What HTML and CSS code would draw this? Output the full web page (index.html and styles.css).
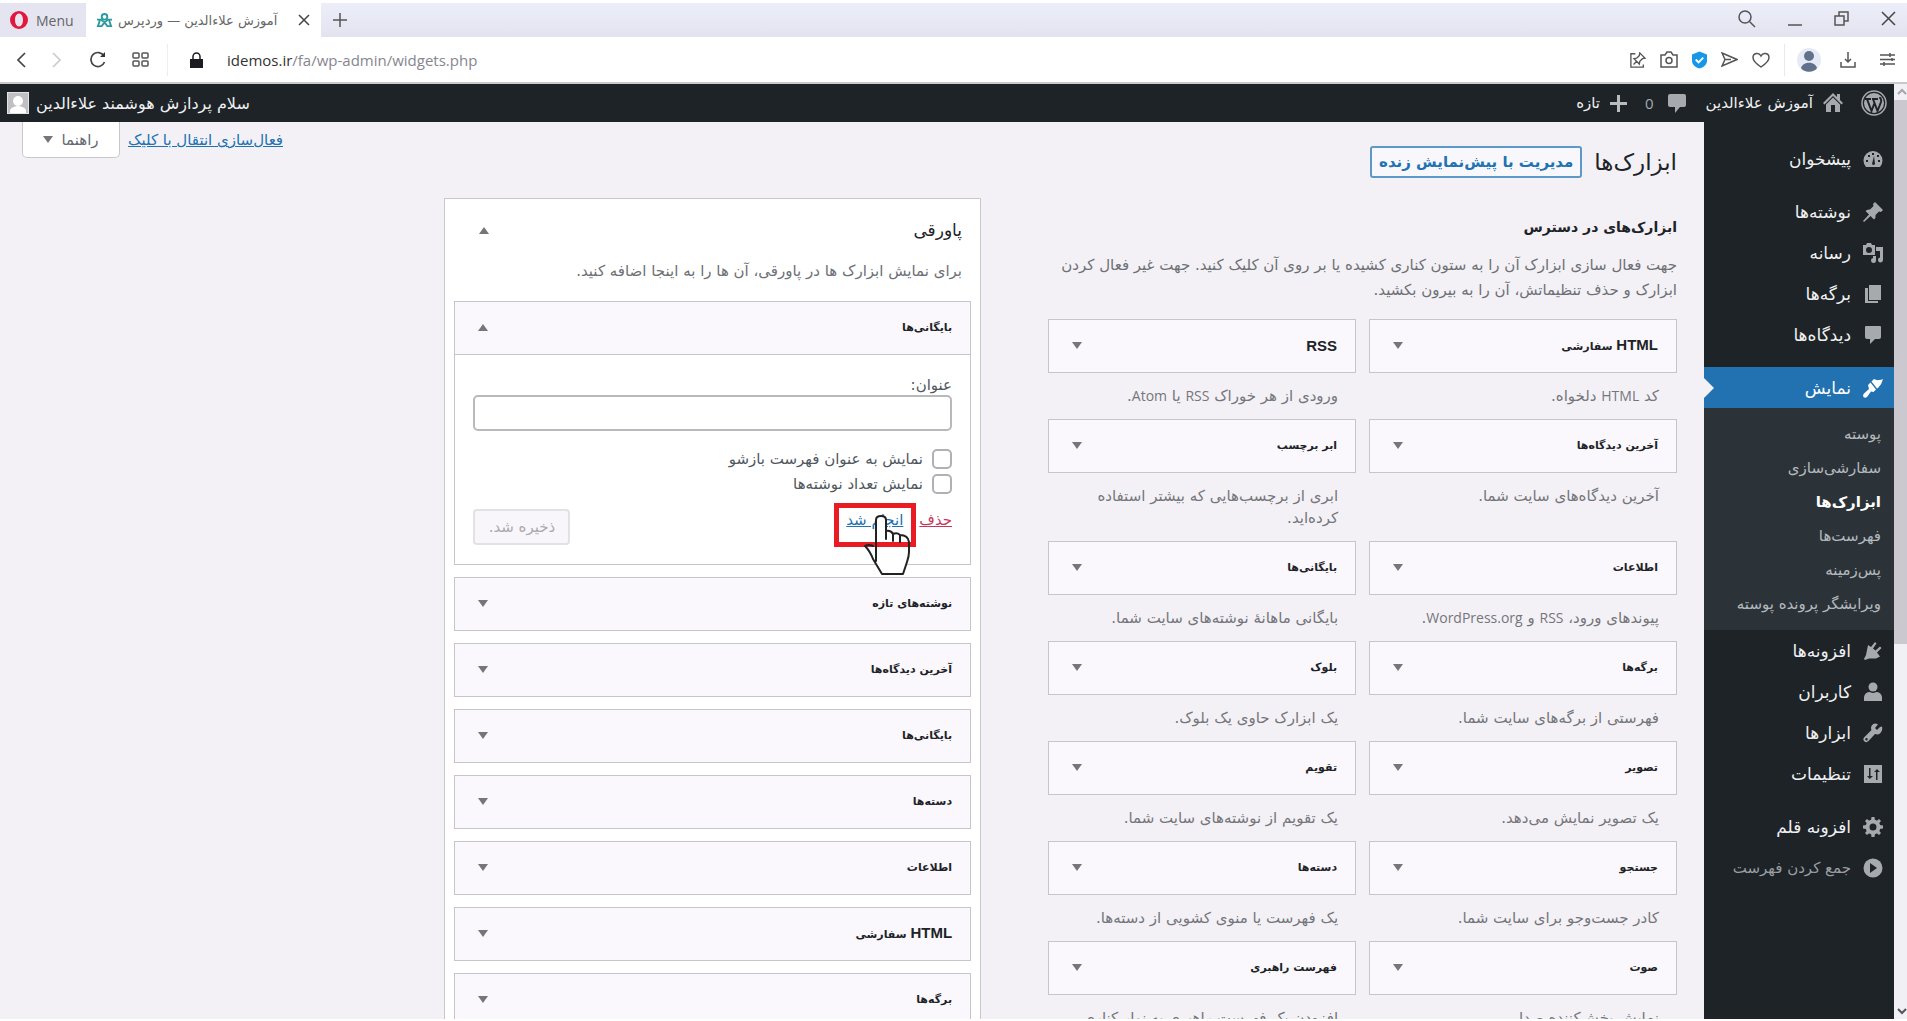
FILE: index.html
```html
<!DOCTYPE html>
<html lang="fa" dir="rtl">
<head>
<meta charset="utf-8">
<title>آموزش علاءالدین — وردپرس</title>
<link rel="stylesheet" href="styles.css">
</head>
<body>
<header class="browser" dir="ltr" lang="en">
  <div class="tabs">
    <button class="opera"><svg viewBox="0 0 18 18" width="18" height="18"><path fill="#e3173e" fill-rule="evenodd" d="M9 0a9 9 0 1 1 0 18A9 9 0 0 1 9 0zm0 2.500C6.400 2.500 5 5.500 5 9s1.400 6.500 4 6.500 4-3 4-6.500-1.400-6.500-4-6.500z"/></svg>Menu</button>
    <div class="tab">
      <svg viewBox="0 0 18 16" width="17" height="15" fill="none" stroke="#2a9aa0" stroke-width="2"><circle cx="9" cy="4" r="3"/><path d="M1 7h4l4 3 4-3h4M4 8l-2 6h4l3-4 3 4h4l-2-6"/></svg>
      <span class="tab-title" dir="rtl" lang="fa">آموزش علاءالدین — وردپرس</span>
      <button class="icon-btn"><svg viewBox="0 0 12 12" width="12" height="12" stroke="#444" stroke-width="1.500"><path d="M1 1l10 10M11 1L1 11"/></svg></button>
    </div>
    <button class="icon-btn plus"><svg viewBox="0 0 14 14" width="14" height="14" stroke="#555" stroke-width="1.500"><path d="M7 0v14M0 7h14"/></svg></button>
    <div class="win">
      <button class="icon-btn"><svg viewBox="0 0 18 18" width="18" height="18" fill="none" stroke="#555" stroke-width="1.500"><circle cx="7" cy="7" r="6"/><path d="M11.500 11.500L17 17"/></svg></button>
      <button class="icon-btn"><svg viewBox="0 0 14 14" width="14" height="14" stroke="#555" stroke-width="1.500"><path d="M0 13h14"/></svg></button>
      <button class="icon-btn"><svg viewBox="0 0 15 15" width="15" height="15" fill="none" stroke="#555" stroke-width="1.500"><path d="M1 5h9v9H1zM5 5V1h9v9h-4"/></svg></button>
      <button class="icon-btn"><svg viewBox="0 0 15 15" width="15" height="15" stroke="#444" stroke-width="1.500"><path d="M1 1l13 13M14 1L1 14"/></svg></button>
    </div>
  </div>
  <div class="nav">
    <div class="nav-left">
      <button class="icon-btn"><svg viewBox="0 0 10 16" width="10" height="16" fill="none" stroke="#444" stroke-width="1.700"><path d="M9 1L2 8l7 7"/></svg></button>
      <button class="icon-btn"><svg viewBox="0 0 10 16" width="10" height="16" fill="none" stroke="#ccc" stroke-width="1.700"><path d="M1 1l7 7-7 7"/></svg></button>
      <button class="icon-btn"><svg viewBox="0 0 17 17" width="17" height="17" fill="none" stroke="#444" stroke-width="1.700"><path d="M15 5A7 7 0 1 0 15.500 11"/><path d="M16 1v5h-5z" fill="#333" stroke="none"/></svg></button>
      <button class="icon-btn"><svg viewBox="0 0 17 15" width="17" height="15" fill="none" stroke="#555" stroke-width="1.500"><rect x="1" y="1" width="6" height="5" rx="1"/><rect x="10" y="1" width="6" height="5" rx="1"/><rect x="1" y="9" width="6" height="5" rx="1"/><rect x="10" y="9" width="6" height="5" rx="1"/></svg></button>
    </div>
    <div class="address">
      <svg viewBox="0 0 13 16" width="13" height="16"><path fill="#1b1b22" d="M0 7h13v9H0z"/><path fill="none" stroke="#1b1b22" stroke-width="1.500" d="M3 7V4.500a3.500 3.500 0 0 1 7 0V7"/></svg>
      <span class="url"><b>idemos.ir</b>/fa/wp-admin/widgets.php</span>
    </div>
    <div class="nav-right">
      <button class="icon-btn"><svg viewBox="0 0 18 18" width="16" height="16" fill="none" stroke="#555" stroke-width="1.500"><path d="M6 2H1v15h14v-3M11 1l6 6-3 .5-3 3-.5 3L4.500 7.500l3-.5 3-3zM7.500 10.500L4 14"/></svg></button>
      <button class="icon-btn"><svg viewBox="0 0 18 17" width="18" height="17" fill="none" stroke="#555" stroke-width="1.500"><path d="M1 4h4l2-3h4l2 3h4v12H1z"/><circle cx="9" cy="9.500" r="3"/></svg></button>
      <button class="icon-btn"><svg viewBox="0 0 16 18" width="15" height="18"><path fill="#1697e8" d="M8 0l8 3v7c0 4-4 7-8 8-4-1-8-4-8-8V3z"/><path fill="none" stroke="#fff" stroke-width="2" d="M4 8.500l3 3 5-5"/></svg></button>
      <button class="icon-btn"><svg viewBox="0 0 17 15" width="17" height="15" fill="none" stroke="#555" stroke-width="1.500"><path d="M1 1l15 6.500L1 14l3-6.500zM4 7.500h6"/></svg></button>
      <button class="icon-btn"><svg viewBox="0 0 18 16" width="18" height="16" fill="none" stroke="#555" stroke-width="1.500"><path d="M9 15C3 11 1 8.500 1 5.500 1 1 7 0 9 4c2-4 8-3 8 1.500C17 8.500 15 11 9 15z"/></svg></button>
      <button class="icon-btn account"><svg viewBox="0 0 24 24" width="24" height="24"><circle cx="12" cy="12" r="12" fill="#e6eaf5"/><circle cx="12" cy="8" r="5" fill="#62718a"/><path fill="#62718a" d="M4 20c2-7 14-7 16 0-3 5-13 5-16 0z"/></svg></button>
      <button class="icon-btn"><svg viewBox="0 0 16 16" width="16" height="16" fill="none" stroke="#555" stroke-width="1.500"><path d="M8 0v10M5 7l3 3 3-3M1 10v5h14v-5"/></svg></button>
      <button class="icon-btn easy"><svg viewBox="0 0 15 13" width="15" height="13" fill="none" stroke="#555" stroke-width="1.500"><path d="M0 2h15M0 6.500h15M0 11h15M10 0v4M4 9v4M12 5v3"/></svg></button>
    </div>
  </div>
</header>

<div class="viewport">
  <div class="site">
    <div class="adminbar">
      <div class="bar-group">
        <a href="#"><svg viewBox="0 0 26 26" width="26" height="26"><circle cx="13" cy="13" r="12" fill="none" stroke="#a7aaad" stroke-width="1.500"/><circle cx="13" cy="13" r="10" fill="#a7aaad"/><path fill="none" stroke="#1d2327" stroke-width="2" d="M4 9h6M11 9h6M6 9l4.500 12L13.500 13M12 9l4.500 12L20 12c1-3-1-3-1-5"/></svg></a>
        <a href="#" class="bar-site"><svg viewBox="0 0 20 20" width="20" height="20"><path fill="#a7aaad" fill-rule="evenodd" d="M10 0l4 4V1h3v6l3 3-1.500 1.500L10 3 1.500 11.500 0 10zM3 11.500l7-7 7 7V19H3zM8 12v7h4v-7z"/></svg>آموزش علاءالدین</a>
        <a href="#" class="bar-comments"><svg viewBox="0 0 18 19" width="18" height="19"><path fill="#a7aaad" d="M2 0h14q2 0 2 2v9q0 2-2 2h-4l-5 6v-6H2q-2 0-2-2V2q0-2 2-2z"/></svg><span class="count">0</span></a>
        <a href="#" class="bar-new"><svg viewBox="0 0 17 17" width="17" height="17"><path fill="#b9bcbf" d="M7 0h3v7h7v3h-7v7H7v-7H0V7h7z"/></svg>تازه</a>
      </div>
      <a href="#" class="hello">سلام پردازش هوشمند علاءالدین<svg viewBox="0 0 22 22" width="22" height="22"><path fill="#e3e3e6" d="M0 0h22v22H0z"/><path fill="#bfbfc4" d="M1 1h20v20H1z"/><circle cx="11" cy="9" r="5" fill="#fff"/><path fill="#fff" d="M3 21v-3c2-3 5-4 8-4s6 1 8 4v3z"/></svg></a>
    </div>
    <div class="wrap">
      <nav class="menu">
        <a href="#"><svg viewBox="0 0 20 20"><path d="M3 18a9.500 9.500 0 1 1 14 0z"/><path fill="#1d2327" d="M9 15l2-8 1 8q-1.500 2-3 0zM3 11h2v2H3zM5 6h2v2H5zM9 4h2v2H9zM14 6h2v2h-2zM15 11h2v2h-2z"/></svg>پیشخوان</a>
        <a href="#" class="gap"><svg viewBox="0 0 20 20"><path d="M12 0l8 8-2 2-2-.5-3.500 3.500q.5 3-1.500 4.500L7.500 14 1 20l-1-1L6 12.500 2.500 9q1.500-2 4.500-1.500l3.500-3.500L10 2z"/></svg>نوشته‌ها</a>
        <a href="#"><svg viewBox="0 0 20 20"><path fill-rule="evenodd" d="M0 2h3l1-2h4l1 2h3v10H0zm6 2a3 3 0 1 0 0 6 3 3 0 0 0 0-6z"/><path d="M13 4h7v13a2.500 2.500 0 1 1-3-2.500V8h-4zM10 13h3v4a2.500 2.500 0 1 1-3-2z"/></svg>رسانه</a>
        <a href="#"><svg viewBox="0 0 20 20"><path d="M6 1h12v15H6zM2 4h3v13h10v2H2z"/></svg>برگه‌ها</a>
        <a href="#"><svg viewBox="0 0 20 20"><path d="M3 1h14q1 0 1 1v10q0 2-2 2h-4l-5 5v-5H4q-2 0-2-2V2q0-1 1-1z"/></svg>دیدگاه‌ها</a>
        <a href="#" class="gap current"><svg viewBox="0 0 20 20"><path d="M8.500 3.500L11 1q2.500 1.500 5 1 2.500 0 4-1-1 5-5 9l-1 .5zM7.500 4.500l5.500 7-2.500 2.500-2.500-.5L4 19q-2 1.500-3.500 0-1-2 .5-3.500l5-4.500L5.500 9 5 7z"/></svg>نمایش</a>
        <div class="submenu">
          <a href="#">پوسته</a>
          <a href="#">سفارشی‌سازی</a>
          <a href="#" class="active">ابزارک‌ها</a>
          <a href="#">فهرست‌ها</a>
          <a href="#">پس‌زمینه</a>
          <a href="#">ویرایشگر پرونده پوسته</a>
        </div>
        <a href="#"><svg viewBox="0 0 20 20"><path d="M5 4l3 2 4-5 1.500 1.500-3.500 5 2.500 2 4.500-4L18.500 7 14 11.500l3 4-4 2H6L2 19l-1-1 2-4z"/></svg>افزونه‌ها</a>
        <a href="#"><svg viewBox="0 0 20 20"><circle cx="10" cy="5" r="4.500"/><path d="M1 19v-4q1-5 6-5 3 2 6 0 5 0 6 5v4z"/></svg>کاربران</a>
        <a href="#"><svg viewBox="0 0 20 20"><path fill-rule="evenodd" d="M17 4l-3 3-2-2 3-3.500Q11-1 8.500 3 7.500 5 8.500 7L1 14.500Q-.5 17 1.500 18.500q2 1.500 4-.5L12 11q3 1 5-.5Q20 8 19 3.500zM3.500 15a1.200 1.200 0 1 1 0 2.400 1.200 1.200 0 0 1 0-2.400z"/></svg>ابزارها</a>
        <a href="#"><svg viewBox="0 0 20 20"><path d="M1 1h18v18H1z"/><path fill="#1d2327" d="M6 4h1.500v8H10l-3.200 3L4 12h2zM13 16h1.500V8H17l-3-3-3 3h2z"/></svg>تنظیمات</a>
        <a href="#" class="gap"><svg viewBox="0 0 20 20"><circle cx="10" cy="10" r="5.500" fill="none" stroke="#a7aaad" stroke-width="4"/><path d="M8.500 0h3l.5 4H8zM8.500 20h3l.5-4H8zM0 8.500v3l4 .5V8zM20 8.500v3l-4 .5V8zM2 4l2-2 3 2.500L4.500 7zM16 2l2 2-2.500 3L13 4.500zM2 16l2 2 3-2.500L4.500 13zM16 18l2-2-2.500-3-2.500 2.500z"/></svg>افزونه قلم</a>
        <button class="collapse"><svg viewBox="0 0 20 20"><circle cx="10" cy="10" r="9.500"/><path fill="#1d2327" d="M7 5l7 5-7 5z"/></svg>جمع کردن فهرست</button>
      </nav>

      <main class="content">
        <section class="available">
          <div class="title-row"><h1>ابزارک‌ها</h1><a href="#" class="live">مدیریت با پیش‌نمایش زنده</a></div>
          <h2>ابزارک‌های در دسترس</h2>
          <p class="intro">جهت فعال سازی ابزارک آن را به ستون کناری کشیده یا بر روی آن کلیک کنید. جهت غیر فعال کردن ابزارک و حذف تنظیماتش، آن را به بیرون بکشید.</p>
          <div class="grid">
            <div class="item"><h3 class="box"><span><span class="latin">HTML</span> سفارشی</span><i class="arrow"></i></h3><p>کد <span class="latin">HTML</span> دلخواه.</p></div>
            <div class="item"><h3 class="box"><span class="latin">RSS</span><i class="arrow"></i></h3><p>ورودی از هر خوراک <span class="latin">RSS</span> یا <span class="latin">Atom</span>.</p></div>
            <div class="item"><h3 class="box">آخرین دیدگاه‌ها<i class="arrow"></i></h3><p>آخرین دیدگاه‌های سایت شما.</p></div>
            <div class="item"><h3 class="box">ابر برچسب<i class="arrow"></i></h3><p>ابری از برچسب‌هایی که بیشتر استفاده کرده‌اید.</p></div>
            <div class="item"><h3 class="box">اطلاعات<i class="arrow"></i></h3><p>پیوندهای ورود، <span class="latin">RSS</span> و <span class="latin">WordPress.org</span>.</p></div>
            <div class="item"><h3 class="box">بایگانی‌ها<i class="arrow"></i></h3><p>بایگانی ماهانهٔ نوشته‌های سایت شما.</p></div>
            <div class="item"><h3 class="box">برگه‌ها<i class="arrow"></i></h3><p>فهرستی از برگه‌های سایت شما.</p></div>
            <div class="item"><h3 class="box">بلوک<i class="arrow"></i></h3><p>یک ابزارک حاوی یک بلوک.</p></div>
            <div class="item"><h3 class="box">تصویر<i class="arrow"></i></h3><p>یک تصویر نمایش می‌دهد.</p></div>
            <div class="item"><h3 class="box">تقویم<i class="arrow"></i></h3><p>یک تقویم از نوشته‌های سایت شما.</p></div>
            <div class="item"><h3 class="box">جستجو<i class="arrow"></i></h3><p>کادر جست‌وجو برای سایت شما.</p></div>
            <div class="item"><h3 class="box">دسته‌ها<i class="arrow"></i></h3><p>یک فهرست یا منوی کشویی از دسته‌ها.</p></div>
            <div class="item"><h3 class="box">صوت<i class="arrow"></i></h3><p>نمایش پخش‌کننده صدا.</p></div>
            <div class="item"><h3 class="box">فهرست راهبری<i class="arrow"></i></h3><p>افزودن یک فهرست راهبری به نوار کناری</p></div>
          </div>
        </section>

        <section class="sidebar-col">
          <div class="panel">
            <div class="panel-head"><h2>پاورقی</h2><i class="arrow up"></i></div>
            <p class="panel-desc">برای نمایش ابزارک ها در پاورقی، آن ها را به اینجا اضافه کنید.</p>
            <div class="widgets">
              <div class="widget">
                <h3 class="box">بایگانی‌ها<i class="arrow up"></i></h3>
                <form class="form">
                  <label for="t">عنوان:</label>
                  <input id="t" type="text" class="text">
                  <div class="check"><input type="checkbox" id="c1"><label for="c1">نمایش به عنوان فهرست بازشو</label></div>
                  <div class="check"><input type="checkbox" id="c2"><label for="c2">نمایش تعداد نوشته‌ها</label></div>
                  <div class="actions">
                    <a href="#" class="delete">حذف</a>
                    <span class="done-wrap"><a href="#">انجام شد</a>
                      <svg class="pointer" viewBox="0 0 82 76" width="82" height="76"><path fill="#fff" d="M42 42V17q0-4 5-4t5 4v11q5-1 7 3 4-2 7 1 8 0 9 7v10q0 4-2 10l-4 12H48L39 56 31 43z"/><path fill="none" stroke="#e91c24" stroke-width="5" d="M2.500 2.500h77v39h-77z"/><path fill="none" stroke="#222" stroke-width="2" stroke-linejoin="round" stroke-linecap="round" d="M42 58V17q0-4 5-4t5 4v19V28q5-1 7 3v7-7q4-2 7 1v7-7q8 0 9 7v10q0 4-2 10l-4 12H48L39 56q-3-8-8-13 4-2 8 0"/></svg>
                    </span>
                    <button type="button" class="saved" disabled>ذخیره شد.</button>
                  </div>
                </form>
              </div>
              <h3 class="box">نوشته‌های تازه<i class="arrow"></i></h3>
              <h3 class="box">آخرین دیدگاه‌ها<i class="arrow"></i></h3>
              <h3 class="box">بایگانی‌ها<i class="arrow"></i></h3>
              <h3 class="box">دسته‌ها<i class="arrow"></i></h3>
              <h3 class="box">اطلاعات<i class="arrow"></i></h3>
              <h3 class="box"><span><span class="latin">HTML</span> سفارشی</span><i class="arrow"></i></h3>
              <h3 class="box">برگه‌ها<i class="arrow"></i></h3>
            </div>
          </div>
        </section>

        <div class="screen-meta">
          <a href="#">فعال‌سازی انتقال با کلیک</a>
          <button class="help">راهنما<i class="arrow"></i></button>
        </div>
      </main>
    </div>
  </div>
  <div class="scroll">
    <svg viewBox="0 0 13 16" width="13" height="16" fill="none" stroke="#a5a5aa" stroke-width="2"><path d="M4 10l4-4 4 4"/></svg>
    <div class="thumb"></div>
    <svg viewBox="0 0 13 16" width="13" height="16" fill="none" stroke="#55555a" stroke-width="2"><path d="M4 6l4 4 4-4"/></svg>
  </div>
</div>
</body>
</html>
```
FILE: styles.css
```css
* { box-sizing: border-box; }
html, body { height: 100%; }
body {
  margin: 0;
  padding: 3px 0 2px;
  background: #fff;
  color: #50575e;
  font-family: "DejaVu Sans", "Liberation Sans", sans-serif;
  font-size: 15px;
  display: flex;
  flex-direction: column;
  overflow: hidden;
}
svg { display: block; flex: none; }
h1, h2, h3, p { margin: 0; }
button { font: inherit; }

.browser { flex: none; font-family: "Open Sans", "Noto Sans", sans-serif; }
.tabs { display: flex; height: 34px; background: linear-gradient(#eceefa, #e2e3ef); }
.icon-btn { border: 0; background: none; padding: 0; display: flex; align-items: center; justify-content: center; }
.opera { display: flex; align-items: center; gap: 8px; width: 86px; padding: 0 0 0 10px; border: 0; background: #e4e5f0; color: #666; font-size: 14px; }
.tab { display: flex; align-items: center; width: 235px; padding: 0 11px 0 10px; gap: 5px; background: #fff; }
.tab-title { flex: 1; font-family: "DejaVu Sans", sans-serif; font-size: 13px; color: #666; white-space: nowrap; text-align: left; }
.plus { width: 38px; }
.win { margin-left: auto; display: flex; align-items: center; gap: 32px; padding: 0 11px 3px 0; }
.nav { display: flex; align-items: center; height: 47px; background: #fff; border-bottom: 2px solid #c9c9cd; }
.nav-left { display: flex; align-items: center; justify-content: space-between; width: 168px; padding: 0 18px 0 16px; border-right: 1px solid #eee; height: 32px; }
.address { display: flex; align-items: center; gap: 24px; padding-left: 22px; }
.url { font-size: 15px; color: #86868f; }
.url b { font-weight: 400; color: #333; }
.nav-right { margin-left: auto; display: flex; align-items: center; gap: 14px; padding-right: 12px; }
.account { border-left: 1px solid #e8e8ee; height: 32px; padding: 0 5px 0 12px; }
.easy { margin-left: 10px; }

.viewport { flex: 1; min-height: 0; display: flex; flex-direction: row-reverse; background: #f3f1f5; }
.site { flex: 1; min-width: 0; display: flex; flex-direction: column; overflow: hidden; }
.scroll { flex: none; width: 13px; background: #f1f0f4; display: flex; flex-direction: column; }
.thumb { height: 544px; background: #cbc9cf; margin-bottom: auto; }

.adminbar { flex: none; height: 38px; background: #1d2327; display: flex; align-items: center; justify-content: space-between; padding: 0 7px; }
.adminbar a { color: #f0f0f1; text-decoration: none; display: flex; align-items: center; gap: 10px; }
.adminbar .hello { gap: 7px; font-size: 16px; }
.bar-group { display: flex; align-items: center; gap: 18px; }
.adminbar .bar-comments { gap: 14px; margin-right: 2px; }
.bar-comments .count { color: #a7aaad; font-family: "Open Sans", sans-serif; }

.wrap { flex: 1; min-height: 0; display: flex; }
.menu { flex: none; width: 190px; background: #1d2327; padding-top: 16px; overflow: hidden; }
.menu > a, .collapse { display: flex; align-items: center; gap: 12px; height: 41px; padding: 0 11px; color: #f0f0f1; text-decoration: none; font-size: 17px; position: relative; }
.menu svg { width: 20px; height: 20px; fill: #a7aaad; }
.menu > .gap { margin-top: 12px; }
.menu > .current { background: #2271b1; color: #fff; }
.menu .current svg { fill: #fff; }
.current::after { content: ""; position: absolute; left: 0; top: 11px; border: 10px solid transparent; border-left-color: #f3f1f5; border-right-width: 0; }
.submenu { background: #2c3338; padding: 9px 13px; }
.submenu a { display: block; height: 34px; line-height: 34px; color: #b4b9be; text-decoration: none; white-space: nowrap; }
.submenu .active { color: #fff; font-weight: 700; }
.menu > .collapse { border: 0; background: none; color: #9a9ea3; font-size: 15px; width: 100%; white-space: nowrap; }

.content { flex: 1; min-width: 0; display: flex; padding-right: 27px; align-items: flex-start; }
.available { width: 37.5%; flex: none; }
.title-row { display: flex; align-items: center; gap: 12px; padding-top: 20px; height: 60px; }
h1 { font-size: 23px; font-weight: 400; color: #1d2327; }
.live { height: 32px; line-height: 28px; padding: 0 7px; border: 2px solid #5c99c9; border-radius: 3px; background: #f8f8fc; color: #2271b1; font-weight: 700; text-decoration: none; white-space: nowrap; }
.available h2 { margin-top: 32px; font-size: 14px; line-height: 26px; color: #1d2327; }
.intro { margin-top: 13px; line-height: 25px; color: #6d7076; }
.grid { display: grid; grid-template-columns: 1fr 1fr; column-gap: 13px; margin-top: 16px; }
.box { display: flex; align-items: center; justify-content: space-between; height: 54px; padding: 0 18px 2px 23px; border: 1px solid #c6c5ca; background: #faf8fc; color: #1d2327; font-size: 11px; }
.latin { font-family: "Liberation Sans", sans-serif; font-size: 15px; line-height: 1; }
.arrow { flex: none; width: 0; height: 0; border: 5px solid transparent; border-top: 7px solid #75757a; border-bottom: 0; }
.arrow.up { border-top: 0; border-bottom: 7px solid #75757a; }
.item p { padding: 12px 18px; line-height: 22px; color: #75767c; }
.item p .latin { font-family: "Open Sans", sans-serif; font-size: 14px; }

.sidebar-col { flex: none; width: 32%; margin: 76px 4% 0 0; }
.panel { background: #fff; border: 1px solid #c9c8cd; padding: 0 9px 30px; }
.panel-head { display: flex; align-items: center; justify-content: space-between; height: 62px; padding: 0 9px 0 25px; }
.panel-head h2 { font-size: 17px; font-weight: 400; color: #1d2327; }
.panel-desc { padding: 0 9px; line-height: 20px; height: 40px; color: #6d7076; }
.widgets { display: flex; flex-direction: column; gap: 12px; }
.form { height: 210px; padding: 20px 18px 0; border: 1px solid #c6c5ca; border-top: 0; }
.form label { display: block; line-height: 20px; }
.text { width: 100%; height: 36px; border: 2px solid #b9b8bd; border-radius: 5px; background: #fff; margin-bottom: 15px; display: block; }
.check { display: flex; align-items: center; gap: 9px; height: 25px; }
.check input { appearance: none; width: 20px; height: 20px; margin: 0; border: 2px solid #b0b0b5; border-radius: 5px; background: #fff; }
.actions { display: flex; gap: 16px; padding-top: 13px; line-height: 22px; }
.actions a { color: #2271b1; }
.actions .delete { color: #c8365b; }
.done-wrap { position: relative; }
.pointer { position: absolute; left: -12px; top: -6px; }
.saved { margin-right: auto; width: 97px; height: 36px; padding: 0; border: 2px solid #e2e1e6; border-radius: 4px; background: #f8f6fa; color: #aaa9af; }

.screen-meta { margin-right: auto; display: flex; gap: 8px; padding-left: 22px; }
.screen-meta a { line-height: 36px; color: #2271b1; white-space: nowrap; }
.help { width: 98px; height: 36px; padding: 0; border: 1px solid #c9c8cd; border-top: 0; border-radius: 0 0 5px 5px; background: #fff; color: #646970; display: flex; align-items: center; justify-content: center; gap: 8px; }
```
